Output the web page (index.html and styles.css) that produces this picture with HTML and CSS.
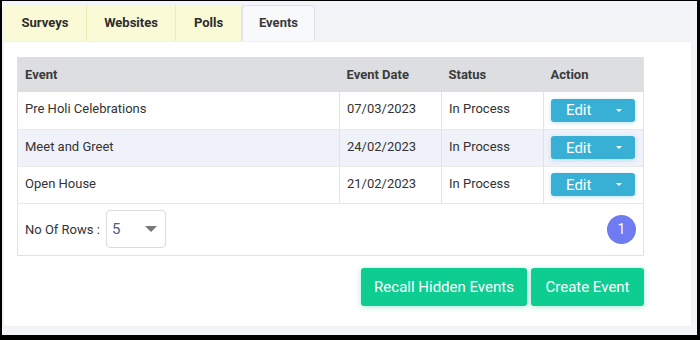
FILE: index.html
```html
<!DOCTYPE html>
<html>
<head>
<meta charset="utf-8">
<link rel="stylesheet" href="styles.css">
</head>
<body>
<div class="screen">
  <div class="tabs">
    <div class="tab">Surveys</div>
    <div class="tab">Websites</div>
    <div class="tab">Polls</div>
    <div class="tab active">Events</div>
  </div>
  <div class="panel">
    <table class="grid">
      <thead>
        <tr>
          <th class="c-event">Event</th>
          <th class="c-date">Event Date</th>
          <th class="c-status">Status</th>
          <th class="c-action">Action</th>
        </tr>
      </thead>
      <tbody>
        <tr>
          <td>Pre Holi Celebrations</td>
          <td>07/03/2023</td>
          <td>In Process</td>
          <td><button class="edit"><span>Edit</span><i class="caret"></i></button></td>
        </tr>
        <tr class="alt">
          <td>Meet and Greet</td>
          <td>24/02/2023</td>
          <td>In Process</td>
          <td><button class="edit"><span>Edit</span><i class="caret"></i></button></td>
        </tr>
        <tr>
          <td>Open House</td>
          <td>21/02/2023</td>
          <td>In Process</td>
          <td><button class="edit"><span>Edit</span><i class="caret"></i></button></td>
        </tr>
        <tr class="foot">
          <td colspan="4">
            <div class="foot-inner">
              <div class="rows">
                <span>No Of Rows :</span>
                <div class="select"><span>5</span><i class="sel-caret"></i></div>
              </div>
              <div class="page">1</div>
            </div>
          </td>
        </tr>
      </tbody>
    </table>
    <div class="actions">
      <button class="green">Recall Hidden Events</button>
      <button class="green">Create Event</button>
    </div>
  </div>
</div>
</body>
</html>
```

FILE: styles.css
```css
html, body {
  margin: 0;
  padding: 0;
  background: #000;
}
body {
  width: 700px;
  height: 340px;
  overflow: hidden;
  font-family: Roboto, "Liberation Sans", sans-serif;
}
.screen {
  margin: 1px 3px 0 2px;
  height: 334px;
  background: #f3f4f7;
  padding: 4px 0 0 2px;
  box-sizing: border-box;
}
.tabs {
  display: flex;
  height: 36px;
}
.tab {
  box-sizing: border-box;
  height: 36px;
  line-height: 36px;
  background: #fafad6;
  border-right: 1px solid #ecebb8;
  font-size: 13px;
  font-weight: 700;
  color: #2d2d2d;
  text-align: center;
}
.tab:nth-child(1) { width: 83px; }
.tab:nth-child(2) { width: 89px; }
.tab:nth-child(3) { width: 66px; }
.tab.active {
  width: 73px;
  background: #f8f9fb;
  border: 1px solid #dfe1e6;
  border-bottom: none;
  border-radius: 4px 4px 0 0;
  color: #3a3a3a;
  line-height: 34px;
}
.panel {
  margin-top: 1px;
  width: 687px;
  height: 284px;
  box-sizing: border-box;
  background: #fff;
  padding: 15px 0 0 13px;
  box-shadow: 0 0 2px rgba(0,0,0,0.06);
}
.grid {
  width: 627px;
  border-collapse: collapse;
  font-size: 13px;
  color: #333;
  border: 1px solid #e2e2e2;
  border-top: none;
}
.grid th {
  background: #dddee2;
  height: 35px;
  text-align: left;
  font-weight: 700;
  color: #3b3b3b;
  padding: 0 0 0 7px;
  box-sizing: border-box;
}
.c-event { width: 322px; }
.c-date { width: 102px; }
.c-status { width: 102px; }
.grid td {
  height: 37px;
  padding: 0 0 3px 7px;
  box-sizing: border-box;
  border-left: 1px solid #e3e3e3;
  border-bottom: 1px solid #e8e8e8;
  vertical-align: middle;
}
.grid td:first-child { border-left: none; }
.grid tr.alt td { background: #eff2f8; }
.grid td:last-child { padding: 0 0 0 7px; }
.edit {
  display: flex;
  align-items: center;
  width: 84px;
  height: 23px;
  border: none;
  border-radius: 3px;
  background: #38b0d5;
  color: #fff;
  font-family: Roboto, "Liberation Sans", sans-serif;
  font-size: 15px;
  padding: 0 0 0 15px;
  box-shadow: 0 1px 4px rgba(56,176,213,0.35);
}
.edit span { flex: 1; text-align: left; }
.caret {
  width: 0;
  height: 0;
  border-left: 3px solid transparent;
  border-right: 3px solid transparent;
  border-top: 3px solid #fff;
  margin-right: 13px;
}
.grid tr.foot td {
  height: 52px;
  padding: 0 7px 0 7px;
  border-bottom: 1px solid #e2e2e2;
}
.foot-inner {
  display: flex;
  align-items: center;
  justify-content: space-between;
}
.rows {
  display: flex;
  align-items: center;
  gap: 6px;
  color: #333;
}
.select {
  width: 60px;
  height: 38px;
  box-sizing: border-box;
  border: 1px solid #dcdcdc;
  border-radius: 4px;
  display: flex;
  align-items: center;
  justify-content: space-between;
  padding: 0 8px 0 5px;
  color: #4b6185;
  font-size: 15px;
}
.sel-caret {
  width: 0;
  height: 0;
  border-left: 6px solid transparent;
  border-right: 6px solid transparent;
  border-top: 6px solid #777;
}
.page {
  width: 29px;
  height: 29px;
  border-radius: 50%;
  background: #6f7bf0;
  color: #fff;
  font-size: 14px;
  display: flex;
  align-items: center;
  justify-content: center;
}
.actions {
  width: 627px;
  display: flex;
  justify-content: flex-end;
  gap: 4px;
  margin-top: 12px;
}
.green {
  height: 38px;
  border: none;
  border-radius: 3px;
  background: #0dcd91;
  color: #fff;
  font-family: Roboto, "Liberation Sans", sans-serif;
  font-size: 15px;
  padding: 0;
  white-space: nowrap;
  box-shadow: 0 1px 6px rgba(13,205,145,0.35);
}
.green:first-child { width: 166px; }
.green:last-child { width: 113px; }
```
